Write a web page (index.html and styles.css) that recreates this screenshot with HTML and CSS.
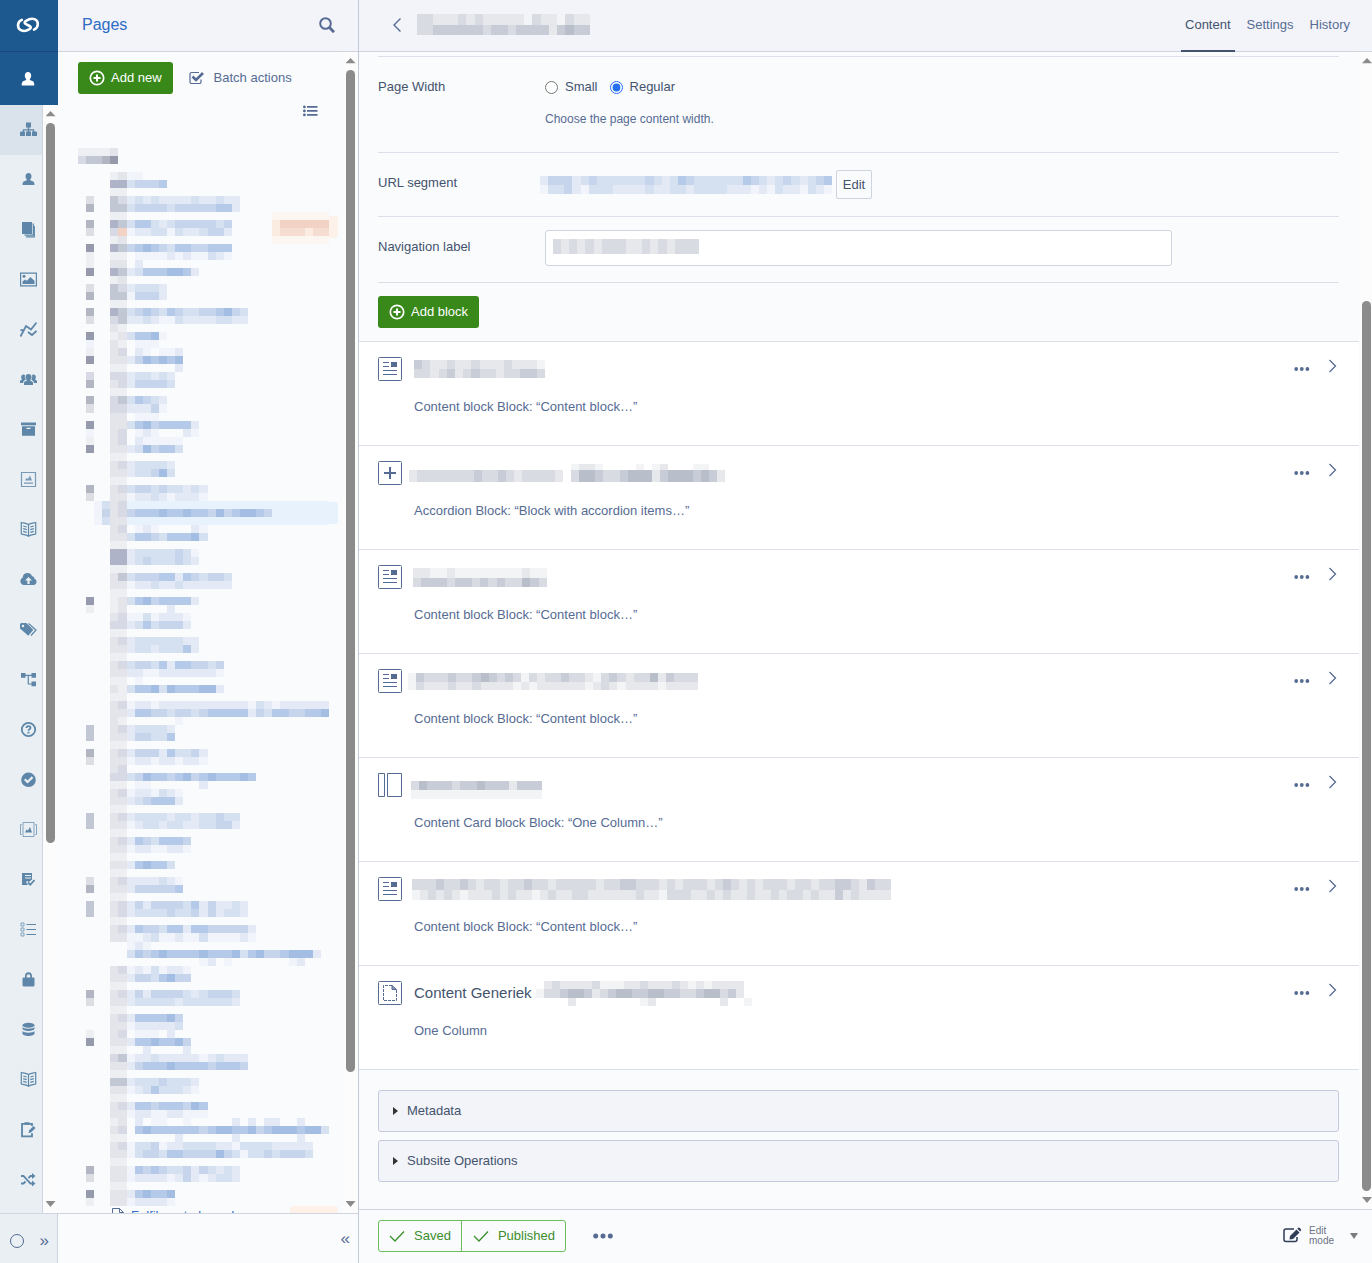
FILE: index.html
```html
<!DOCTYPE html>
<html lang="en">
<head>
  <meta charset="UTF-8">
  <meta name="viewport" content="width=device-width, initial-scale=1.0">
  <title>Pages</title>
  <link rel="stylesheet" href="styles.css">
</head>
<body>
  <div class="cms">

    <!-- Main menu -->
    <aside class="menu">
      <a href="#" class="menu-logo" aria-label="Home">
        <svg width="24" height="16" viewBox="0 0 24 16" fill="none" stroke="#fff" stroke-width="2.600" stroke-linecap="round"><path d="M18 12.600C22.700 10.800 23 4.200 19 2.400 15.500.9 12.500 2.300 10 3.900 8 5.200 8.500 6.400 10 7.200L13.500 9C15.500 10.100 15 11.300 13.500 12.200 11 13.800 8 14.900 4.900 13.200.7 11 1.200 4.600 5.800 2.900"/></svg>
      </a>
      <a href="#" class="menu-user" aria-label="Profile">
        <svg width="14" height="14" viewBox="0 0 14 14" fill="#fff"><path d="M7 0c2 0 3.200 1.500 3.200 3.600C10.200 5.300 9.500 6.500 8.700 7.300c.2 1 .8 1.200 2.200 1.500C12.700 9.200 13.300 10.500 13.300 13.500H.7C.7 10.500 1.300 9.200 3.100 8.800c1.400-.3 2-.5 2.200-1.500C4.500 6.500 3.800 5.300 3.800 3.600 3.800 1.500 5 0 7 0z"/></svg>
      </a>
      <div class="menu-body">
        <nav class="menu-list">
          <a href="#" class="menu-item active" aria-label="Pages"><svg viewBox="0 0 17 17"><path d="M6 1.500h5v5H9.200v1.800h5v2.200H16a1 1 0 0 1 1 1v3.500h-5v-4.500h1V9.500H9.200v1H11V15H6v-4.500h1.800v-1H4v1h1V15H0v-3.500a1 1 0 0 1 1-1h1.800V8.300h5V6.500H6z"/></svg></a>
          <a href="#" class="menu-item" aria-label="Profile"><svg viewBox="0 0 17 17"><path d="M8.500 2c2 0 3 1.300 3 3.200 0 1.500-.7 2.600-1.400 3.300.2.900.7 1.100 2 1.400 1.900.4 2.400 1.500 2.400 4.100h-12c0-2.600.5-3.700 2.400-4.100 1.300-.3 1.800-.5 2-1.400-.7-.7-1.400-1.800-1.400-3.300 0-1.900 1-3.200 3-3.200z"/></svg></a>
          <a href="#" class="menu-item" aria-label="Reports"><svg viewBox="0 0 17 17"><path d="M2 1h10v12H2z"/><path class="line" d="M12.500 3.200h.8v11H4.500M14.300 5v10.800H6"/></svg></a>
          <a href="#" class="menu-item" aria-label="Files"><svg viewBox="0 0 17 17"><path class="line" d="M.6 2.100h15.800v12.800H.6z"/><circle cx="4" cy="5.300" r="1.500"/><path d="M2.500 13v-2.500L5 8.500l1.800 1.200L10.500 6l1.700 1.800 2.300 2V13z"/></svg></a>
          <a href="#" class="menu-item" aria-label="Statistics"><svg viewBox="0 0 17 17"><path class="line thick" d="M.5 15.500 6 5l5 3.500 5.500-7M.5 9l3 .3M8 11l4 3 4.500-4"/></svg></a>
          <a href="#" class="menu-item" aria-label="Groups"><svg viewBox="0 0 17 17"><path d="M8.500 3C10.300 3 11.500 4.200 11.500 6S10.600 8.500 10 9.200c.3.900 3 .8 3 3V14H4v-1.800c0-2.200 2.700-2.100 3-3C6.400 8.500 5.500 7.800 5.500 6S6.700 3 8.500 3zM3.500 3.500c.7 0 1.200.3 1.500.8-.6 2 .1 3.600.8 4.500-1.500.7-2.600 1.400-2.700 3.200H0v-1.500C0 9 1.800 9 2 8.300 1.400 7.500 1.200 7 1.200 6c0-1.500.8-2.500 2.300-2.500zM13.500 3.500c-.7 0-1.200.3-1.500.8.6 2-.1 3.600-.8 4.500 1.500.7 2.600 1.400 2.700 3.200H17v-1.500c0-1.500-1.800-1.500-2-2.200.6-.8.8-1.300.8-2.300 0-1.500-.8-2.500-2.300-2.500z"/></svg></a>
          <a href="#" class="menu-item" aria-label="Archive"><svg viewBox="0 0 17 17"><path d="M1 1.500h15v2.800H1z"/><path fill-rule="evenodd" d="M2 5.200h13v9.600H2zm4.500 1.500v1.200h4V6.700z"/></svg></a>
          <a href="#" class="menu-item faded" aria-label="Banners"><svg viewBox="0 0 17 17"><path class="line" d="M1.500 1.500h14v14h-14z"/><path d="M5 9.500 6.500 7l1.500 1 2-3.500 2 5zM4 11.500h9v1.200H4z"/></svg></a>
          <a href="#" class="menu-item" aria-label="Catalog"><svg viewBox="0 0 17 17"><path class="line" d="M8.500 3.500C6.500 2 3.500 2 1.300 1.500v11.500c2.200.5 5 .5 7.200 2.200 2.200-1.700 5-1.700 7.200-2.200V1.500c-2.200.5-5.200.5-7.200 2zM8.500 3.500v11.700M3.200 5l3.500 1M3.200 7.700l3.500 1M3.200 10.300l3.500 1M13.800 5l-3.500 1M13.800 7.700l-3.500 1M13.800 10.300l-3.500 1"/></svg></a>
          <a href="#" class="menu-item" aria-label="Upload"><svg viewBox="0 0 17 17"><path fill-rule="evenodd" d="M4 14a4 4 0 0 1-1.300-7.600A4.800 4.800 0 0 1 12 5.200c2 .2 2.500 1.300 2.300 2.600A3.200 3.200 0 0 1 14 14zM8.500 6 5 9.500h2.400V13h2.200V9.500H12z"/></svg></a>
          <a href="#" class="menu-item" aria-label="Tags"><svg viewBox="0 0 17 17"><path fill-rule="evenodd" d="M0 3.500A1.500 1.500 0 0 1 1.500 2h4.800l7 6.800-5 6L0 7.500zM3 3.800a1.200 1.200 0 1 0 0 2.400 1.200 1.200 0 0 0 0-2.400z"/><path class="line" d="M8.500 2.500 16 9l-5 5.500"/></svg></a>
          <a href="#" class="menu-item" aria-label="Workflow"><svg viewBox="0 0 17 17"><path d="M1 2h4.500v4.800H1zM11.500 2H16v4.800h-4.500zM11.500 10.500H16v4.800h-4.500z"/><path class="line" d="M5 4.400h7M8.300 4.400V13H12"/></svg></a>
          <a href="#" class="menu-item" aria-label="Help"><svg viewBox="0 0 17 17"><circle class="line thick" cx="8.500" cy="8.500" r="6.700"/><path class="line thick" d="M6.500 7c0-2.400 4-2.400 4 0 0 1.400-2 1.300-2 2.700"/><path d="M7.500 10.800h2v1.700h-2z"/></svg></a>
          <a href="#" class="menu-item" aria-label="Approvals"><svg viewBox="0 0 17 17"><path fill-rule="evenodd" d="M8.500 1.500a7.300 7.300 0 1 1 0 14.600 7.300 7.300 0 0 1 0-14.600zM4 9l3.500 3.500 5.800-5.600-1.500-1.600L7.500 9.500 5.500 7.500z"/></svg></a>
          <a href="#" class="menu-item" aria-label="Slides"><svg viewBox="0 0 17 17"><path class="line faint" d="M3 1.500h11v14H3zM1.800 3.500H.5v10h1.300M15.200 3.500h1.300v10h-1.300"/><path d="m5 11.500 1.500-3 1.500 1L10 6l2 5.500z"/></svg></a>
          <a href="#" class="menu-item" aria-label="Forms"><svg viewBox="0 0 17 17"><path fill-rule="evenodd" d="M2 2h10v6.500L9 11l-2-1-1 1 2 3H2zm3 2v1h6V4zm0 2.500v1h6v-1z"/><path class="line thick" d="m8 11.500 2.300 2.300L14.500 9"/></svg></a>
          <a href="#" class="menu-item" aria-label="Lists"><svg viewBox="0 0 17 17"><path class="line" d="M6.500 3.500H16M6.500 8.500H16M6.500 13.500H16"/><path class="line faint" d="M1 2h3v3H1zM1 7h3v3H1zM1 12h3v3H1z"/></svg></a>
          <a href="#" class="menu-item" aria-label="Security"><svg viewBox="0 0 17 17"><path fill-rule="evenodd" d="M5 6.500V5.300a3.500 4 0 0 1 7 0v1.200h1.500a1 1 0 0 1 1 1V14a1.500 1.500 0 0 1-1.500 1.500H4A1.500 1.500 0 0 1 2.500 14V7.500a1 1 0 0 1 1-1zm1.700 0h3.600V5.300c0-2.800-3.600-2.800-3.600 0z"/></svg></a>
          <a href="#" class="menu-item" aria-label="Data"><svg viewBox="0 0 17 17"><ellipse cx="8.500" cy="4.300" rx="6" ry="2.500"/><path d="M2.500 6c1.500 2.300 10.500 2.300 12 0v1.500c0 3.300-12 3.300-12 0zM2.500 10c1.500 2.300 10.500 2.300 12 0v2.500c0 3.300-12 3.300-12 0z"/></svg></a>
          <a href="#" class="menu-item" aria-label="Guides"><svg viewBox="0 0 17 17"><path class="line" d="M8.500 3.500C6.500 2 3.500 2 1.300 1.500v11.500c2.200.5 5 .5 7.200 2.200 2.200-1.700 5-1.700 7.200-2.200V1.500c-2.200.5-5.200.5-7.200 2zM8.500 3.500v11.700M3.200 5l3.500 1M3.200 7.700l3.500 1M3.200 10.300l3.500 1M13.800 5l-3.500 1M13.800 7.700l-3.500 1M13.800 10.300l-3.500 1"/></svg></a>
          <a href="#" class="menu-item" aria-label="Tasks"><svg viewBox="0 0 17 17"><path class="line thick" d="M12 5V2.800H2v12.500h10v-3"/><path d="M4.500 1.200h5v2.500h-5zM8.500 12l.5-2.500L13.500 5l2 2L11 11.500z"/></svg></a>
          <a href="#" class="menu-item" aria-label="Redirects"><svg viewBox="0 0 17 17"><path class="line thick" d="M1 5h2.500l7 7.500H13M1 12.500h2.500l2-2M8.500 7l2-2H13"/><path d="M12 2l3.500 3L12 8zM12 9.500l3.500 3-3.500 3z"/></svg></a>
        </nav>
        <div class="scroll">
          <i class="arrow up"></i><i class="thumb menu-thumb"></i><i class="space menu-space"></i><i class="arrow down"></i>
        </div>
      </div>
      <div class="menu-foot">
        <span class="status-dot"></span>
        <button type="button" class="toggle" aria-label="Expand menu">»</button>
      </div>
    </aside>

    <!-- Page tree -->
    <section class="tree-panel">
      <header class="tree-head">
        <h1>Pages</h1>
        <button type="button" class="icon-btn" aria-label="Search"><svg width="16" height="16" viewBox="0 0 16 16" fill="none" stroke="#566b94" stroke-width="2"><circle cx="6.500" cy="6.500" r="5.300"/><path d="m10.500 10.500 4.500 4.700" stroke-width="2.800"/></svg></button>
      </header>
      <div class="tree-body">
        <div class="tree-content">
          <div class="tree-tools">
            <button type="button" class="btn-green"><svg width="16" height="16" viewBox="0 0 16 16" fill="none" stroke="#fff" stroke-width="1.700"><circle cx="8" cy="8" r="6.700"/><path stroke-width="2" d="M8 4.500v7M4.500 8h7"/></svg>Add new</button>
            <button type="button" class="batch"><svg width="15" height="14" viewBox="0 0 15 14" fill="none" stroke="#566b94"><path d="M10 1.500H2.500a1.500 1.500 0 0 0-1.500 1.500v8a1.500 1.500 0 0 0 1.500 1.500h8a1.500 1.500 0 0 0 1.500-1.500V8.500" stroke-width="1.200"/><path d="m3.500 5.500 3.500 3.500L14 2" stroke-width="2.600"/></svg>Batch actions</button>
          </div>
          <div class="tree-view">
            <button type="button" class="icon-btn" aria-label="List view"><svg width="15" height="12" viewBox="0 0 15 12" fill="#566b94"><path d="M4 1h10.500v1.800H4zM4 5h10.500v1.800H4zM4 9h10.500v1.800H4z"/><circle cx="1.400" cy="1.900" r="1.400"/><circle cx="1.400" cy="5.900" r="1.400"/><circle cx="1.400" cy="9.900" r="1.400"/></svg></button>
          </div>
          <div class="tree-map">
            <i class="tree-selected"></i>
            <i class="tree-tag"></i>
            <svg class="mosaic" data-mosaic="tree"></svg>
          </div>
          <div class="tree-row">
            <svg width="14" height="14" viewBox="0 0 14 14" fill="none" stroke="#566b94"><path d="M1.500.5h7l4 4v9h-11zM8.500.5v4h4"/></svg>
            <a href="#">Fulfilment alround</a>
            <span class="tag"></span>
          </div>
        </div>
        <div class="scroll">
          <i class="arrow up"></i><i class="thumb tree-thumb"></i><i class="space tree-space"></i><i class="arrow down"></i>
        </div>
      </div>
      <div class="tree-foot">
        <button type="button" class="toggle" aria-label="Collapse tree">«</button>
      </div>
    </section>

    <!-- Edit form -->
    <main class="main">
      <header class="main-head">
        <a href="#" class="back" aria-label="Back"><svg width="10" height="16" viewBox="0 0 10 16" fill="none" stroke="#566b94" stroke-width="1.400"><path d="M8.500 1.500 2 8l6.500 6.500"/></svg></a>
        <svg class="mosaic m-title" data-mosaic="title"></svg>
        <nav class="tabs">
          <a href="#" class="tab current">Content</a>
          <a href="#" class="tab">Settings</a>
          <a href="#" class="tab">History</a>
        </nav>
      </header>
      <div class="main-body">
        <div class="main-content">
          <form class="fields">
            <div class="field field-width">
              <span class="label">Page Width</span>
              <div class="control">
                <div class="radios">
                  <input type="radio" id="small" name="width"><label for="small">Small</label>
                  <input type="radio" id="regular" name="width" checked><label for="regular">Regular</label>
                </div>
                <p class="help">Choose the page content width.</p>
              </div>
            </div>
            <div class="field field-url">
              <span class="label">URL segment</span>
              <div class="control url">
                <svg class="mosaic m-url" data-mosaic="url"></svg>
                <button type="button" class="btn-edit">Edit</button>
              </div>
            </div>
            <div class="field field-nav">
              <label class="label" for="navLabel">Navigation label</label>
              <div class="control nav-label">
                <input type="text" id="navLabel">
                <svg class="mosaic m-nav" data-mosaic="nav"></svg>
              </div>
            </div>
            <div class="field field-add">
              <button type="button" class="btn-green"><svg width="16" height="16" viewBox="0 0 16 16" fill="none" stroke="#fff" stroke-width="1.700"><circle cx="8" cy="8" r="6.700"/><path stroke-width="2" d="M8 4.500v7M4.500 8h7"/></svg>Add block</button>
            </div>
          </form>

          <div class="blocks" id="blocks"></div>

          <div class="panels">
            <details class="panel"><summary>Metadata</summary></details>
            <details class="panel"><summary>Subsite Operations</summary></details>
          </div>
        </div>
        <div class="scroll">
          <i class="arrow up"></i><i class="space main-space"></i><i class="thumb main-thumb"></i><i class="arrow down"></i>
        </div>
      </div>
      <footer class="main-foot">
        <div class="btn-group">
          <button type="button"><svg width="16" height="12" viewBox="0 0 16 12"><path d="m1 6 5 5 9-9.500"/></svg>Saved</button>
          <button type="button"><svg width="16" height="12" viewBox="0 0 16 12"><path d="m1 6 5 5 9-9.500"/></svg>Published</button>
        </div>
        <button type="button" class="icon-btn" aria-label="More options"><svg width="20" height="6" viewBox="0 0 20 6" fill="#566b94"><circle cx="2.700" cy="3" r="2.500"/><circle cx="10" cy="3" r="2.500"/><circle cx="17.300" cy="3" r="2.500"/></svg></button>
        <button type="button" class="mode">
          <svg width="19" height="18" viewBox="0 0 19 18" fill="none" stroke="#2f3d56" stroke-width="1.500"><path d="M11 2H3a2 2 0 0 0-2 2v8.500a2 2 0 0 0 2 2h9a2 2 0 0 0 2-2V10"/><path fill="#2f3d56" stroke="none" d="M6.500 12.500 7 9l6.500-6.500 3 3L10 12zM14.300 1.700 15.500.5c.6-.6 2.700 1.500 2.700 2.500l-1 1.500z"/></svg>
          <span>Edit<br>mode</span>
          <i class="caret"></i>
        </button>
      </footer>
    </main>
  </div>
  <script src="script.js"></script>
</body>
</html>
```

FILE: styles.css
```css
* {
  box-sizing: border-box;
}

body {
  margin: 0;
  font-family: "Helvetica Neue", "Liberation Sans", Arial, sans-serif;
  font-size: 13px;
  line-height: 20px;
  color: #43536d;
  background-color: #fafbfd;
}

a {
  text-decoration: none;
  color: inherit;
}

button {
  font: inherit;
  color: inherit;
  padding: 0;
  border: none;
  background: none;
  cursor: pointer;
}

svg {
  display: block;
  flex: none;
}

.cms {
  display: flex;
  height: 100vh;
  overflow: hidden;
}

/* Scrollbars */
.scroll {
  display: flex;
  flex-direction: column;
  align-items: center;
  flex: none;
  width: 15px;
  background-color: #fcfcfc;
}

.arrow {
  flex: none;
  width: 10px;
  height: 18px;
  background-color: #8b8b8b;
}

.up {
  clip-path: polygon(50% 34%, 100% 62%, 0 62%);
}

.down {
  clip-path: polygon(0 34%, 100% 34%, 50% 66%);
}

.thumb {
  width: 9px;
  border-radius: 5px;
  background-color: #8b8b8b;
}

.menu-thumb { flex: 720; }
.menu-space { flex: 352; }
.tree-thumb { flex: 1002; }
.tree-space { flex: 123; }
.main-space { flex: 231; }
.main-thumb { flex: 890; }

/* Main menu */
.menu {
  display: flex;
  flex-direction: column;
  flex: none;
  width: 58px;
}

.menu-logo,
.menu-user {
  display: flex;
  align-items: center;
  justify-content: center;
  flex: none;
  background-color: #1d588f;
}

.menu-logo {
  height: 52px;
  padding: 0 2px 2px 0;
  border-bottom: 1px solid #174a7b;
}

.menu-user {
  height: 53px;
  padding-right: 2px;
}

.menu-body {
  display: flex;
  flex: 1;
  min-height: 0;
}

.menu-list {
  flex: 1;
  overflow: hidden;
  background-color: #e9eff3;
  border-right: 1px solid #ced5e1;
}

.menu-item {
  display: flex;
  align-items: center;
  height: 50px;
  padding: 0 0 1px 20px;
}

.menu-item.active {
  background-color: #dae2eb;
}

.menu-item svg {
  width: 17px;
  height: 17px;
  fill: #5d86a8;
}

.menu-item .line {
  fill: none;
  stroke: #5d86a8;
  stroke-width: 1.2px;
}

.menu-item .thick {
  stroke-width: 1.8px;
}

.menu-item .faint {
  stroke-width: 1px;
  opacity: 0.7;
}

.menu-item.faded {
  opacity: 0.8;
}

.menu-foot {
  display: flex;
  align-items: center;
  justify-content: space-between;
  flex: none;
  height: 50px;
  padding: 4px 8px 0 10px;
  background-color: #e9eff3;
  border-top: 1px solid #ced5e1;
  border-right: 1px solid #ced5e1;
}

.status-dot {
  width: 14px;
  height: 14px;
  border: 1px solid #566b94;
  border-radius: 50%;
}

.toggle {
  font-size: 17px;
  color: #566b94;
}

/* Page tree */
.tree-panel {
  display: flex;
  flex-direction: column;
  flex: none;
  width: 301px;
  border-right: 1px solid #c3cadb;
}

.tree-head {
  display: flex;
  align-items: center;
  justify-content: space-between;
  flex: none;
  height: 52px;
  padding: 0 23px 2px 24px;
  background-color: #f3f4f9;
  border-bottom: 1px solid #ced5e1;
}

.tree-head h1 {
  margin: 0;
  font-size: 16px;
  font-weight: normal;
  color: #2b6cc4;
}

.tree-body {
  display: flex;
  flex: 1;
  min-height: 0;
}

.tree-content {
  flex: 1;
  overflow: hidden;
  padding: 10px 5px 0 20px;
}

.tree-tools {
  display: flex;
  gap: 16px;
}

.btn-green {
  display: flex;
  align-items: center;
  gap: 6px;
  height: 32px;
  padding: 0 11px;
  color: #fff;
  background-color: #38891a;
  border-radius: 3px;
}

.batch {
  display: flex;
  align-items: center;
  gap: 10px;
  color: #566b94;
}

.tree-view {
  display: flex;
  justify-content: flex-end;
  padding: 11px 20px 31px 0;
}

.tree-map {
  position: relative;
}

.tree-map .mosaic {
  position: relative;
  width: 251px;
  height: 1058px;
}

.tree-selected {
  position: absolute;
  top: 354px;
  left: 16px;
  width: 244px;
  height: 22px;
  border-radius: 3px;
  background-color: #e8f2fd;
}

.tree-tag {
  position: absolute;
  top: 68px;
  left: 240px;
  width: 20px;
  height: 22px;
  border-radius: 3px;
  background-color: #fdf1e9;
}

.tree-row {
  display: flex;
  gap: 6px;
  padding: 2px 0 0 33px;
  line-height: 16px;
  color: #2b6cc4;
}

.tree-row .tag {
  width: 48px;
  height: 22px;
  margin: -2px 0 0 auto;
  border-radius: 3px;
  background-color: #fdf1e9;
}

.tree-foot {
  display: flex;
  align-items: center;
  justify-content: flex-end;
  flex: none;
  height: 50px;
  padding-right: 8px;
  border-top: 1px solid #ced5e1;
}

/* Edit form */
.main {
  display: flex;
  flex-direction: column;
  flex: 1;
  min-width: 0;
}

.main-head {
  display: flex;
  align-items: center;
  flex: none;
  height: 52px;
  padding: 0 18px 2px 33px;
  background-color: #f3f4f9;
  border-bottom: 1px solid #ced5e1;
}

.back {
  margin-right: 15px;
}

.tabs {
  display: flex;
  align-self: flex-start;
  gap: 8px;
  height: 52px;
  margin-left: auto;
}

.tab {
  padding: 15px 4px 0;
  color: #566b94;
}

.tab.current {
  color: #43536d;
  border-bottom: 2px solid #43536d;
}

.main-body {
  display: flex;
  flex: 1;
  min-height: 0;
}

.main-body .scroll {
  width: 13px;
  align-items: flex-end;
}

.main-body .thumb {
  margin-right: 1px;
}

.main-content {
  flex: 1;
  overflow: hidden;
}

.fields {
  padding: 4px 20px 0 19px;
}

.field {
  display: flex;
  border-top: 1px solid #dbdfe9;
}

.field-width { height: 96px; padding-top: 20px; }
.field-url { height: 64px; }
.field-nav { height: 66px; }
.field-add { height: 59px; padding-top: 13px; }

.field-url .label,
.field-nav .label {
  padding-top: 20px;
}

.label {
  flex: none;
  width: 167px;
}

.control {
  flex: 1;
}

.radios {
  display: flex;
  align-items: center;
}

.radios input {
  width: 13px;
  height: 13px;
  margin: 0 7px 0 0;
  accent-color: #256ff5;
}

.radios label {
  margin-right: 12px;
}

.help {
  margin: 12px 0 0;
  font-size: 12px;
  color: #566b94;
}

.url {
  display: flex;
  align-items: center;
  gap: 4px;
  margin-left: -5px;
}

.btn-edit {
  width: 36px;
  height: 29px;
  border: 1px solid #ced5e1;
  border-radius: 2px;
}

.nav-label {
  position: relative;
  padding: 13px 167px 0 0;
}

.nav-label input {
  width: 100%;
  height: 36px;
  padding: 0 8px;
  font: inherit;
  background-color: #fff;
  border: 1px solid #ced5e1;
  border-radius: 3px;
}

.nav-label .mosaic {
  position: absolute;
  top: 22px;
  left: 8px;
}

/* Content blocks */
.blocks {
  background-color: #fff;
  border-bottom: 1px solid #dbdfe9;
}

.block {
  display: flex;
  height: 104px;
  padding: 15px 22px 0 19px;
  border-top: 1px solid #dbdfe9;
}

.block-text {
  flex: 1;
  padding-left: 12px;
}

.block-title {
  display: flex;
  align-items: center;
  gap: 4px;
  height: 24px;
  margin: 0;
  font-size: 15px;
  font-weight: normal;
}

.block-text p {
  margin: 16px 0 0;
  color: #566b94;
}

.block-actions {
  display: flex;
  gap: 18px;
}

.block-more {
  height: 24px;
}

.block-open {
  height: 18px;
}

/* Collapsible panels */
.panels {
  display: flex;
  flex-direction: column;
  gap: 8px;
  padding: 20px 20px 0 19px;
}

.panel {
  background-color: #f3f4f9;
  border: 1px solid #c3cadb;
  border-radius: 3px;
}

.panel summary {
  display: flex;
  align-items: center;
  gap: 9px;
  height: 40px;
  padding-left: 14px;
  cursor: pointer;
}

.panel summary::before {
  content: '';
  border: 4px solid transparent;
  border-left: 5px solid #333;
  border-right: none;
}

.main-foot {
  display: flex;
  align-items: center;
  flex: none;
  height: 54px;
  padding: 0 14px 2px 19px;
  border-top: 1px solid #ced5e1;
}

.btn-group {
  display: flex;
  margin-right: 27px;
  border: 1px solid #6cbd59;
  border-radius: 3px;
}

.btn-group button {
  display: flex;
  align-items: center;
  gap: 9px;
  height: 30px;
  padding: 0 10px;
  color: #3a8f2c;
}

.btn-group button + button {
  padding-left: 11px;
  border-left: 1px solid #6cbd59;
}

.btn-group svg {
  fill: none;
  stroke: #3a8f2c;
  stroke-width: 1.3px;
}

.mode {
  display: flex;
  align-items: center;
  gap: 7px;
  margin-left: auto;
  font-size: 10px;
  line-height: 10px;
  text-align: left;
  color: #6d7486;
}

.caret {
  margin-left: 9px;
  border: 4px solid transparent;
  border-top: 6px solid #7b7b7b;
  border-bottom: none;
}

/* Mosaic sizes */
.m-title { width: 173px; height: 21px; }
.m-url { width: 292px; height: 18px; }
.m-nav { width: 146px; height: 15px; }
.m-b1 { width: 131px; height: 18px; }
.m-b2 { width: 316px; height: 18px; margin-left: -5px; }
.m-b3 { width: 134px; height: 19px; margin-left: -1px; }
.m-b4 { width: 290px; height: 17px; margin-left: -6px; }
.m-b5 { width: 131px; height: 27px; margin-left: -3px; }
.m-b6 { width: 479px; height: 21px; margin-left: -2px; }
.m-b7 { width: 216px; height: 25px; }
```

FILE: script.js
```js
// one letter per cell, "." is empty
const tones = {
  a: '#f1f4fa', b: '#e4eaf5', c: '#d5e1f0', d: '#c6d5ec', e: '#b5c9e8', f: '#a3bde3',
  g: '#eeeff2', h: '#e3e5ea', i: '#d7dae4', j: '#c2c7d4', k: '#afb3c7',
  q: '#959bad', r: '#b2b5c2', s: '#dddee4',
  o: '#f1d2c5', x: '#f5ddd1', p: '#fbece1', y: '#fcf6f3', w: '#e8f2fd',
  1: '#f3f4f6', 2: '#e6e8ec', 3: '#d8dbe2', 4: '#c8ccd6', 5: '#b9becb'
};

const mosaics = {
  title: ['332223232222213221322', '334444443443444424544'],
  url: ['bdddbcdccccccdcbcedccccccedcbcdcbcde', 'accdbacccbbbbcbbccbccccbbbabacbbacba'],
  nav: ['323232333223232333'],
  b1: ['4322322322232221', '3323423433233443'],
  b2: ['....................1221....1.12...11..', '2333333343343233332.3554334555245554542', '2333333343343233332.3554334555245554542'],
  b3: ['2211211111111211', '3444344343433543'],
  b4: ['143334334543431323343321343233524333', '132223223222212122222212321222212222'],
  b5: ['................', '3544434454442444', '1111111111111111'],
  b6: ['333433432332334332333332334433323233323432323332332334432433', '123232122232322123223322222232213332232322322323323224232222'],
  b7: ['.2322223111223222321212222', '133455423455445544334553420', '....2........12........2..1'],
  tree: [
    'ggggh', 'ijjrq', '', '....ghaa', '....kkcddde', '....gg',
    '.s..jibcbcbbbbcbbcbb', '.r..jjcddddcdddddeeb',
    '....gg..................yyyyyyy',
    '.r..kjceecbcdddddcd.....poooooo', '.s..ioabbccacbbcddb.....pxxxpxx',
    '....gh..................yyyyyyy',
    '.q..kjdefedceeddeee', '.g..gg.aaaababaacba', '.g..hh.b', '.q..kjbceeeffeb',
    '....gh', '.s..jibcccb', '.r..jjadddb', '....gg', '.r..kjcdedcedccddefdc', '.s..ijbbcbaacbbbbccbb',
    '....hg', '.q..ghceefa', '.a..hg.aaa', '.g..hi.ba.aab', '.q..hhbdfefef', '....gg......b',
    '.i..iibccbcb', '.r..hibddddc', '....gg', '.r..ijcedcb', '.s..iibbbda',
    '....hh.aaa', '.q..hhcefdeeeeb', '.a..hi.aba...ba', '.g..hi.baaaaa', '.q..hhbcfdeec',
    '....gg', '....hibccccb', '....hhbccdfc', '....gg', '.r..hicddcdccbcb', '.s..hhabbcbabbba',
    '..achiwwwwwwwwwwwwwwwwwwwwwwwww', '..adhideeefeefeedfdeffed', '..achhwwwwwwwwwwwwwwwwwwwwwwwww',
    '....hi.aba....ba', '....hhceedceeefc', '....gg', '....kkbcccccdca', '....kkbcdcccdcb',
    '....gg', '....hjcdddeebedcddc', '....hhabbcbbcbbbbbb', '....gg', '.q..ghcefdeeeeb',
    '.g..gh.....b', '....hiaacabbba', '....iibcecdddb', '....gg', '....hibccccccbb', '....hhbccbccceb',
    '....gg', '....hicddcebeeddcd', '....hhbbaabbbbbbba', '....gg.a', '....hgceefcfeeeffb',
    '....gg', '....hiabbabbbbbbbbbbbacbabbbbbb', '....hhbeeddcddcdeeeeebdceeddeef', '....hg......a',
    '.j..hibccccb', '.j..hhbddcce', '....gg', '.r..hibdddbeccdb', '.s..hhabbabbabba',
    '....hi', '....iicdfeedefdefeeefe', '....gg.aa......b', '....hiabbacba', '....hhbcdeeeb',
    '....gg', '.j..hibccccbccbccdcc', '.j..hhabccbccbbccddb', '....gg', '....hibedceeed', '....hhabbaabba',
    '....gg', '....hhbefeec', '....gg', '.s..hibbbbcba', '.r..hhbddddde',
    '....gg', '.j..hibdbddddcebdbbcb', '.j..hibccccdccdbdbccb', '....gg', '....hibeddceebeedddddb', '....hhaabcaabaacaaaaba',
    '......aba', '......cedefeeeefeeefcefddefffb', '...............ab.a.......ab',
    '....hiabacabba', '....hhbddcefdd', '....gg', '.r..hibdbddddcbcdddc', '.s..hhbcccccbccccccb',
    '....gg', '....hibeeeefd', '....hhabbbbbc', '.g..hi.aaa.b', '.q..hhbeefeefd', '....gg..b....b',
    '....ijabbcbbbbbabcbbb', '....hhbdeeefeeeedeeed', '....gg', '....jjbcccdcccb', '....hhabcecccba',
    '....gg', '....hibeedeeedfe', '....hhabbaabbaaa',
    '....gh.b.aa..a.....b.b.bb..b', '....hi.efeeeeeedeffeefdefffeffc', '....gg......b......b.......b',
    '....hiaccdabbccccbbaccccbbbbb', '....hhacddceeddddfdcaccdcdddc',
    '....gg', '.r..hhaededccdbdcbcb', '.s..hhabbbbabdbabccb', '....gg', '.q..hhbefeef', '.g..hhabbbba'
  ]
};

const iconContent = '<rect x=".5" y=".5" width="23" height="23" rx="1"/><path d="M5 5.500h6M5 9.500h6M5 13.500h14M5 17.500h14"/><path fill="#566b94" stroke="none" d="M13 5h6v5h-6z"/>';
const iconPlus = '<rect x=".5" y=".5" width="23" height="23" rx="1"/><path stroke-width="2" d="M12 6v12M6 12h12"/>';
const iconCard = '<path d="M.5.5h6v23h-6zM9.500.5h14v23h-14z"/>';
const iconPage = '<rect x=".5" y=".5" width="23" height="23" rx="1"/><path stroke-dasharray="3 1" d="M14 4.500H5.500v15h13V9"/><path fill="#8c9bb8" d="M14 4.500v4h4.500z"/>';

const blocks = [
  { icon: iconContent, mosaic: 'b1', text: 'Content block Block: “Content block…”' },
  { icon: iconPlus, mosaic: 'b2', text: 'Accordion Block: “Block with accordion items…”' },
  { icon: iconContent, mosaic: 'b3', text: 'Content block Block: “Content block…”' },
  { icon: iconContent, mosaic: 'b4', text: 'Content block Block: “Content block…”' },
  { icon: iconCard, mosaic: 'b5', text: 'Content Card block Block: “One Column…”' },
  { icon: iconContent, mosaic: 'b6', text: 'Content block Block: “Content block…”' },
  { icon: iconPage, mosaic: 'b7', title: 'Content Generiek', text: 'One Column' }
];

document.getElementById('blocks').innerHTML = blocks.map(b => `
  <article class="block">
    <svg width="24" height="24" viewBox="0 0 24 24" fill="none" stroke="#566b94">${b.icon}</svg>
    <div class="block-text">
      <h3 class="block-title">${b.title || ''}<svg class="mosaic m-${b.mosaic}" data-mosaic="${b.mosaic}"></svg></h3>
      <p>${b.text}</p>
    </div>
    <div class="block-actions">
      <button type="button" class="block-more" aria-label="More"><svg width="16" height="4" viewBox="0 0 16 4" fill="#566b94"><circle cx="2.200" cy="2" r="1.900"/><circle cx="7.800" cy="2" r="1.900"/><circle cx="13.400" cy="2" r="1.900"/></svg></button>
      <button type="button" class="block-open" aria-label="Open"><svg width="9" height="14" viewBox="0 0 9 14" fill="none" stroke="#566b94" stroke-width="1.300"><path d="M1.500 1 7.500 7l-6 6"/></svg></button>
    </div>
  </article>`).join('');

document.querySelectorAll('[data-mosaic]').forEach(svg => {
  const rows = mosaics[svg.dataset.mosaic];
  const cols = Math.max(...rows.map(r => r.length));
  svg.setAttribute('viewBox', `0 0 ${cols} ${rows.length}`);
  svg.setAttribute('preserveAspectRatio', 'none');
  svg.setAttribute('shape-rendering', 'crispEdges');
  svg.innerHTML = rows.map((row, y) => [...row].map((t, x) =>
    tones[t] ? `<rect x="${x}" y="${y}" width="1" height="1" fill="${tones[t]}"/>` : '').join('')).join('');
});
```
